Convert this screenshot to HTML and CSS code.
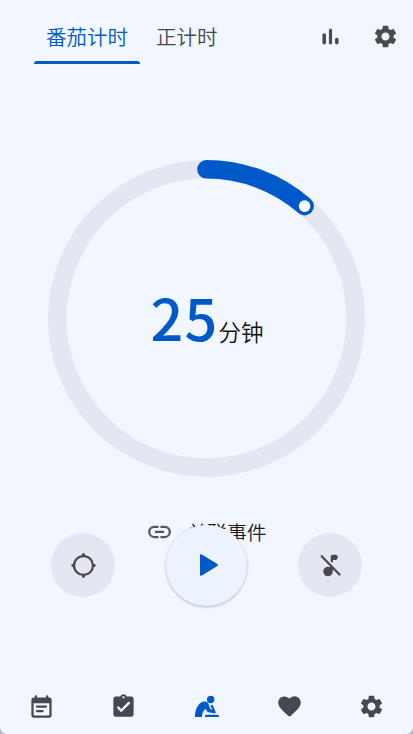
FILE: index.html
```html
<!DOCTYPE html>
<html lang="zh-CN">
<head>
<meta charset="utf-8">
<title>番茄计时</title>
<link rel="stylesheet" href="styles.css">
</head>
<body>
<div class="app">
  <header class="top">
    <nav class="tabs">
      <span class="tab active">番茄计时</span>
      <span class="tab">正计时</span>
    </nav>
    <div class="actions">
      <svg class="icon" viewBox="0 0 24 24"><path d="M6.400 9.200c1 0 1.600.7 1.600 1.600v6.600c0 .9-.7 1.600-1.600 1.600s-1.600-.7-1.600-1.600v-6.600c0-.9.7-1.600 1.600-1.600zM12 5c.8 0 1.400.6 1.400 1.400v11.200c0 .8-.6 1.400-1.400 1.400s-1.400-.6-1.400-1.400V6.400c0-.8.6-1.400 1.400-1.400zm5.600 8c.9 0 1.600.7 1.600 1.600v2.800c0 .9-.7 1.600-1.600 1.600s-1.600-.7-1.600-1.600v-2.800c0-.9.7-1.600 1.600-1.600z"/></svg>
      <svg class="icon" viewBox="0 0 24 24"><path d="M19.14 12.94c.04-.3.06-.61.06-.94 0-.32-.02-.64-.07-.94l2.03-1.58c.18-.14.23-.41.12-.61l-1.92-3.32c-.12-.22-.37-.29-.59-.22l-2.39.96c-.5-.38-1.03-.7-1.62-.94l-.36-2.54c-.04-.24-.24-.41-.48-.41h-3.84c-.24 0-.43.17-.47.41l-.36 2.54c-.59.24-1.13.57-1.62.94l-2.39-.96c-.22-.08-.47 0-.59.22L2.74 8.87c-.12.21-.08.47.12.61l2.03 1.58c-.05.3-.09.63-.09.94s.02.64.07.94l-2.03 1.58c-.18.14-.23.41-.12.61l1.92 3.32c.12.22.37.29.59.22l2.39-.96c.5.38 1.03.7 1.62.94l.36 2.54c.05.24.24.41.48.41h3.84c.24 0 .44-.17.47-.41l.36-2.54c.59-.24 1.13-.56 1.62-.94l2.39.96c.22.08.47 0 .59-.22l1.92-3.32c.12-.22.07-.47-.12-.61l-2.01-1.58zM12 15.6c-1.98 0-3.6-1.62-3.6-3.6s1.62-3.6 3.6-3.6 3.6 1.62 3.6 3.6-1.62 3.6-3.6 3.6z"/></svg>
    </div>
  </header>

  <main class="timer">
    <div class="dial">
      <svg class="ring" viewBox="0 0 317 317">
        <circle class="track" cx="158.5" cy="158.5" r="149.2"/>
        <path class="progress" d="M158.5 9.3A149.2 149.2 0 0 1 256.6 46.1"/>
        <circle class="knob" cx="256.6" cy="46.1" r="5.8"/>
      </svg>
      <div class="time"><span class="value">25</span><span class="unit">分钟</span></div>
    </div>
    <div class="link">
      <svg class="icon" viewBox="0 0 24 24"><path class="stroke" d="M10.400 7.900H7.400a4.500 4.500 0 0 0 0 9h3M13.600 7.900H16.600a4.500 4.500 0 0 1 0 9h-3M8.800 12.400h6.400"/></svg>
      <span>关联事件</span>
    </div>
    <div class="controls">
      <button class="round" aria-label="专注"><svg class="icon" viewBox="0 0 24 24"><circle class="stroke" cx="12" cy="12" r="8.4"/><path d="M10.700 4V2.300c0-.7.5-1.100 1.300-1.100s1.300.4 1.300 1.100V4zM10.700 20v1.700c0 .7.5 1.100 1.300 1.100s1.300-.4 1.300-1.100V20zM4 10.700H2.300c-.7 0-1.100.5-1.100 1.300s.4 1.300 1.100 1.300H4zM20 10.700h1.700c.7 0 1.100.5 1.100 1.300s-.4 1.300-1.100 1.300H20z"/></svg></button>
      <button class="play" aria-label="开始"><svg class="play-icon" viewBox="0 0 18 22"><path d="M0 1.300C0 .2 1 0 1.800.5L17 9.800c1.100.7 1.100 1.700 0 2.400L1.800 21.500C1 22 0 21.800 0 20.700z"/></svg></button>
      <button class="round" aria-label="静音"><svg class="icon" viewBox="0 0 24 24"><path d="M12.200 9V4.400c0-1.200.7-1.900 1.800-1.900h2.500c1.100 0 2 .9 2 2.200s-.9 2.300-2 2.300h-2.300L14.200 9z"/><circle cx="9.800" cy="17.400" r="4.200"/><path d="M11.700 11.500l2.400 2.400V17h-2.400z"/><path class="stroke" d="M4.200 3.800L20 20"/></svg></button>
    </div>
  </main>

  <nav class="bottom">
    <a class="item"><svg class="icon" viewBox="0 0 24 24"><path d="M19 4h-1V3c0-.55-.45-1-1-1s-1 .45-1 1v1H8V3c0-.55-.45-1-1-1s-1 .45-1 1v1H5c-1.110 0-1.990.9-1.990 2L3 20c0 1.100.89 2 2 2h14c1.100 0 2-.9 2-2V6c0-1.100-.9-2-2-2zm0 15c0 .55-.45 1-1 1H6c-.55 0-1-.45-1-1V9h14v10zM8 11h8c.55 0 1 .45 1 1s-.45 1-1 1H8c-.55 0-1-.45-1-1s.45-1 1-1zm0 4h5c.55 0 1 .45 1 1s-.45 1-1 1H8c-.55 0-1-.45-1-1s.45-1 1-1z"/></svg></a>
    <a class="item"><svg class="icon" viewBox="0 0 24 24"><path d="M19 3h-4.180C14.400 1.840 13.300 1 12 1s-2.400.84-2.820 2H5c-1.100 0-2 .9-2 2v14c0 1.100.9 2 2 2h14c1.100 0 2-.9 2-2V5c0-1.100-.9-2-2-2zm-7-.2c.6 0 1 .4 1 1s-.4 1-1 1-1-.4-1-1 .4-1 1-1zM10 17l-4-4 1.410-1.410L10 14.170l6.590-6.590L18 9l-8 8z"/></svg></a>
    <a class="item active"><svg class="icon" viewBox="0 0 24 24"><circle cx="15.700" cy="5.800" r="3.300"/><path d="M1.700 21.300C1.700 14 5.200 7.500 10.500 7.500c1.700 0 2.500.5 3 1.600l1.900 5.200 1.700.5-1.700-3.700 1.900-.6 2.700 5.900c.5 1.200-.2 2-1.300 1.700l-5-.9c-.7-.1-1.100-.5-1.400-1.100l-.9-2c-2.300 1.600-3.400 3.900-3.400 7.200z"/><path d="M12 19.400h9.600c1 0 1.600.7 1.600 1.900H10.500c0-1.200.6-1.900 1.500-1.900z"/></svg></a>
    <a class="item"><svg class="icon" viewBox="0 0 24 24"><path d="M13.350 20.130c-.76.69-1.930.69-2.690-.01l-.11-.1C5.300 15.270 1.870 12.160 2 8.280c.06-1.700.93-3.330 2.340-4.290 2.640-1.800 5.900-.96 7.660 1.100 1.760-2.060 5.020-2.910 7.660-1.100 1.410.96 2.280 2.590 2.340 4.290.14 3.880-3.300 6.990-8.550 11.760l-.1.090z"/></svg></a>
    <a class="item"><svg class="icon" viewBox="0 0 24 24"><path d="M19.14 12.94c.04-.3.06-.61.06-.94 0-.32-.02-.64-.07-.94l2.03-1.58c.18-.14.23-.41.12-.61l-1.92-3.32c-.12-.22-.37-.29-.59-.22l-2.39.96c-.5-.38-1.03-.7-1.62-.94l-.36-2.54c-.04-.24-.24-.41-.48-.41h-3.84c-.24 0-.43.17-.47.41l-.36 2.54c-.59.24-1.13.57-1.62.94l-2.39-.96c-.22-.08-.47 0-.59.22L2.74 8.870c-.12.21-.08.47.12.61l2.03 1.58c-.05.3-.09.63-.09.94s.02.64.07.94l-2.03 1.58c-.18.14-.23.41-.12.61l1.92 3.32c.12.22.37.29.59.22l2.39-.96c.5.38 1.03.7 1.62.94l.36 2.54c.05.24.24.41.48.41h3.84c.24 0 .44-.17.47-.41l.36-2.54c.59-.24 1.13-.56 1.62-.94l2.39.96c.22.08.47 0 .59-.22l1.92-3.32c.12-.22.07-.47-.12-.61l-2.01-1.58zM12 15.6c-1.98 0-3.6-1.62-3.6-3.6s1.62-3.6 3.6-3.6 3.6 1.62 3.6 3.6-1.62 3.6-3.6 3.6z"/></svg></a>
  </nav>
</div>
</body>
</html>
```
FILE: styles.css
```css
* { box-sizing: border-box; }
body {
  margin: 0;
  background: #b4b5b8;
  font-family: "Noto Sans CJK SC", "Noto Sans", sans-serif;
  font-weight: 350;
  color: #1a1b1e;
}
.app {
  display: flex;
  flex-direction: column;
  height: 734px;
  background: #f1f6ff;
  border-radius: 0 0 7px 7px;
  overflow: hidden;
}
.icon { display: block; width: 27px; height: 27px; fill: currentColor; }
.stroke { fill: none; stroke: currentColor; stroke-width: 2; stroke-linecap: round; }

.top {
  display: flex;
  justify-content: space-between;
  height: 73px;
  padding: 9px 14px 0 34px;
}
.tabs { display: flex; height: 55px; }
.tab {
  padding: 0 12px;
  line-height: 55px;
  font-size: 20.5px;
  color: #46474f;
}
.tab.active {
  width: 106px;
  margin-right: 4px;
  color: #0059c9;
}
.tab.active::after {
  content: "";
  display: block;
  height: 3px;
  margin: -3px -12px 0;
  border-radius: 3px 3px 0 0;
  background: #0059c9;
}
.actions { display: flex; gap: 28px; padding-top: 14px; color: #4a4a4c; }

.timer {
  flex: 1;
  display: flex;
  flex-direction: column;
  align-items: center;
  padding-top: 87px;
}
.dial { display: grid; width: 317px; height: 317px; }
.ring, .time { grid-area: 1 / 1; }
.ring { width: 317px; height: 317px; }
.track { fill: none; stroke: #e4e7f1; stroke-width: 18.6px; }
.progress { fill: none; stroke: #0059c9; stroke-width: 18.6px; stroke-linecap: round; }
.knob { fill: #fff; }
.time {
  display: flex;
  justify-content: center;
  align-items: baseline;
  padding: 114px 0 0 1px;
  line-height: 84px;
}
.value {
  font: 500 57.5px/84px "Noto Sans CJK SC", "Noto Sans", sans-serif;
  letter-spacing: 1.2px;
  color: #0059c9;
}
.unit { font-size: 22.5px; color: #111; }

.link {
  display: flex;
  align-items: center;
  gap: 14px;
  height: 30px;
  margin-top: 39px;
  font-size: 19.8px;
  color: #1a1b1e;
}
.link .icon { color: #55565a; }

.controls {
  display: flex;
  justify-content: space-between;
  align-items: center;
  width: 311px;
  height: 81px;
  margin-top: -21.5px;
  z-index: 1;
}
button { display: grid; place-items: center; border: 0; padding: 0; border-radius: 50%; }
.round { width: 64px; height: 64px; background: #e4e7f1; color: #49494a; }
.play {
  width: 81px;
  height: 81px;
  background: #edf3fd;
  box-shadow: 0 1px 3px rgba(0, 0, 0, .25);
}
.play-icon { width: 18px; height: 22px; margin-left: 4px; fill: #0059c9; }

.bottom { display: flex; height: 55px; color: #454751; }
.item { flex: 1; display: grid; place-items: center; }
.item.active { color: #0059c9; }
```
